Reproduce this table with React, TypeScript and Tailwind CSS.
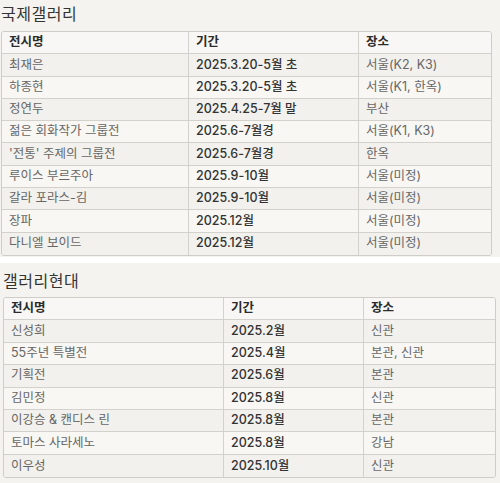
import React from 'react';

type Row = [string, string, string];

const KUKJE: Row[] = [
  ['최재은', '2025.3.20-5월 초', '서울(K2, K3)'],
  ['하종현', '2025.3.20-5월 초', '서울(K1, 한옥)'],
  ['정연두', '2025.4.25-7월 말', '부산'],
  ['젊은 회화작가 그룹전', '2025.6-7월경', '서울(K1, K3)'],
  ["'전통' 주제의 그룹전", '2025.6-7월경', '한옥'],
  ['루이스 부르주아', '2025.9-10월', '서울(미정)'],
  ['갈라 포라스-김', '2025.9-10월', '서울(미정)'],
  ['장파', '2025.12월', '서울(미정)'],
  ['다니엘 보이드', '2025.12월', '서울(미정)'],
];

const HYUNDAI: Row[] = [
  ['신성희', '2025.2월', '신관'],
  ['55주년 특별전', '2025.4월', '본관, 신관'],
  ['기획전', '2025.6월', '본관'],
  ['김민정', '2025.8월', '신관'],
  ['이강승 & 캔디스 린', '2025.8월', '본관'],
  ['토마스 사라세노', '2025.8월', '강남'],
  ['이우성', '2025.10월', '신관'],
];

const font = "font-['Inter','Noto_Sans_CJK_KR',sans-serif]";

const Table: React.FC<{ rows: Row[]; cols: string; rowH: string }> = ({ rows, cols, rowH }) => (
  <div className="border border-[#cfcdc7] rounded-[3px] overflow-hidden bg-[#f7f6f3]">
    <div className={`grid ${cols} ${rowH} border-b border-[#d3d1cb] bg-[#f8f7f5] text-[12.5px] font-semibold text-[#2b2b2b]`}>
      <div className="px-[7px] flex items-center border-r border-[#d3d1cb]">전시명</div>
      <div className="px-[7px] flex items-center border-r border-[#d3d1cb]">기간</div>
      <div className="px-[7px] flex items-center">장소</div>
    </div>
    {rows.map((r, i) => (
      <div
        key={i}
        className={`grid ${cols} ${rowH} text-[12.5px] ${i < rows.length - 1 ? 'border-b border-[#d3d1cb]' : ''} ${i % 2 === 0 ? 'bg-[#f2f1ed]' : 'bg-[#f8f7f4]'}`}
      >
        <div className="px-[7px] flex items-center border-r border-[#d3d1cb] text-[#666]">{r[0]}</div>
        <div className="px-[7px] flex items-center border-r border-[#d3d1cb] text-[#333] font-medium">{r[1]}</div>
        <div className="px-[7px] flex items-center text-[#666]">{r[2]}</div>
      </div>
    ))}
  </div>
);

export default function App() {
  return (
    <div className={`w-[500px] h-[483px] bg-white ${font}`}>
      {/* Kukje */}
      <div className="h-[257px] bg-[#f4f3ef] pl-[1px] pr-[8px]">
        <h2 className="h-[31px] pt-[3px] text-[16px] text-[#333] leading-[22px] font-normal tracking-[0.5px]">국제갤러리</h2>
        <Table rows={KUKJE} cols="grid-cols-[187px_170px_1fr]" rowH="h-[22.3px]" />
      </div>

      {/* Hyundai */}
      <div className="mt-[6px] h-[220px] bg-[#f4f3ef] pl-[3px] pr-[4px]">
        <h2 className="h-[34px] pt-[7px] text-[16px] text-[#333] leading-[22px] font-normal tracking-[0.5px]">갤러리현대</h2>
        <Table rows={HYUNDAI} cols="grid-cols-[220px_140px_1fr]" rowH="h-[22.4px]" />
      </div>
    </div>
  );
}
